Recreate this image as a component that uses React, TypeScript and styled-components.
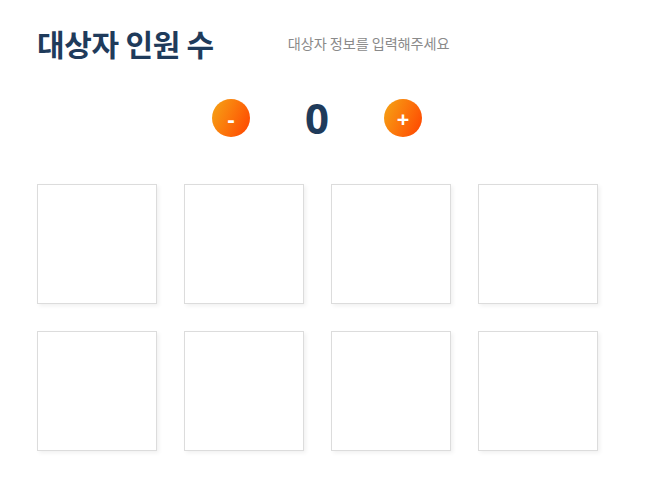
import React, { useState } from "react";
import styled, { createGlobalStyle } from "styled-components";

const Global = createGlobalStyle`
  html, body { margin: 0; padding: 0; background: #fff; }
  body { font-family: "Noto Sans CJK KR", "Noto Sans", sans-serif; }
`;

const Page = styled.div`
  width: 652px;
  height: 496px;
  box-sizing: border-box;
  padding: 24px 0 0 37px;
`;

const Header = styled.div`
  display: flex;
  align-items: center;
  height: 38px;
`;

const Title = styled.h1`
  margin: 0;
  font-size: 30px;
  font-weight: 700;
  color: #1f3b5b;
  letter-spacing: -0.3px;
  line-height: 38px;
`;

const Subtitle = styled.span`
  margin-left: 74px;
  font-size: 14.2px;
  color: #8a8a8a;
  letter-spacing: -0.1px;
`;

const Counter = styled.div`
  width: 560px;
  display: flex;
  justify-content: center;
  align-items: center;
  margin-top: 37px;
  height: 38px;
`;

const RoundButton = styled.button`
  width: 38px;
  height: 38px;
  border-radius: 50%;
  border: none;
  padding: 0;
  background: linear-gradient(115deg, #f4a515 0%, #fb7a0c 45%, #ff4200 100%);
  color: #fff;
  font-family: "Noto Sans", sans-serif;
  font-weight: 700;
  font-size: 22px;
  line-height: 38px;
  display: flex;
  align-items: center;
  justify-content: center;
  cursor: pointer;
`;

const Count = styled.span`
  width: 134px;
  text-align: center;
  font-family: "Noto Sans", sans-serif;
  font-weight: 700;
  font-size: 42px;
  color: #1f3b5b;
  line-height: 38px;
`;

const Grid = styled.div`
  display: grid;
  grid-template-columns: repeat(4, 120px);
  grid-auto-rows: 120px;
  gap: 27px;
  margin-top: 47px;
`;

const Slot = styled.div`
  box-sizing: border-box;
  border: 1px solid #dcdcdc;
  background: #fff;
  box-shadow: 2px 2px 4px rgba(0, 0, 0, 0.06);
`;

export default function App() {
  const [count, setCount] = useState(0);
  return (
    <Page>
      <Global />
      <Header>
        <Title>대상자 인원 수</Title>
        <Subtitle>대상자 정보를 입력해주세요</Subtitle>
      </Header>
      <Counter>
        <RoundButton onClick={() => setCount((c) => Math.max(0, c - 1))}>-</RoundButton>
        <Count>{count}</Count>
        <RoundButton onClick={() => setCount((c) => c + 1)}>+</RoundButton>
      </Counter>
      <Grid>
        {Array.from({ length: 8 }).map((_, i) => (
          <Slot key={i} />
        ))}
      </Grid>
    </Page>
  );
}
